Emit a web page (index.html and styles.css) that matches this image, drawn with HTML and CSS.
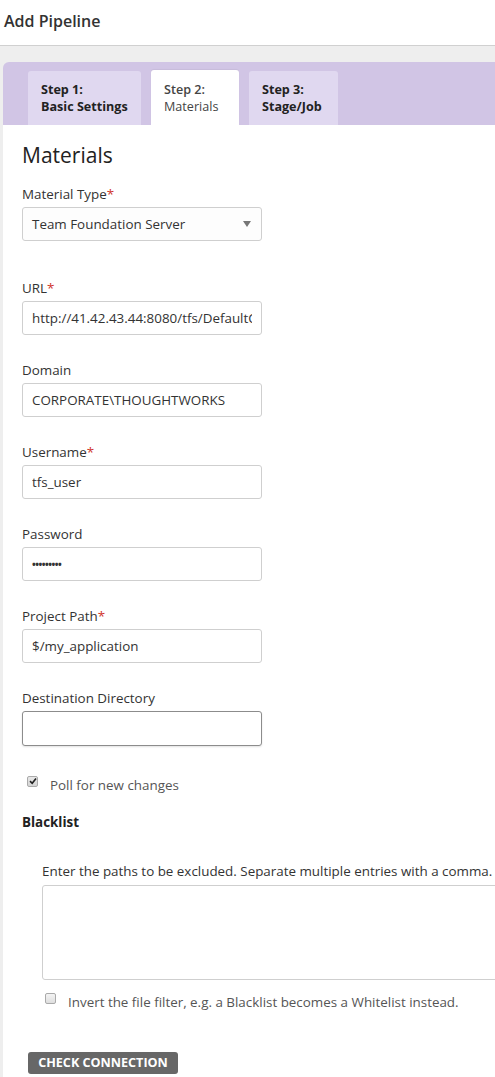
FILE: index.html
```html
<!DOCTYPE html>
<html>
<head>
<meta charset="utf-8">
<link rel="stylesheet" href="styles.css">
</head>
<body>
<header class="topbar"><span class="title">Add Pipeline</span></header>
<div class="page">
  <div class="wizard">
    <nav class="tabs">
      <div class="tab"><b>Step 1:</b><b>Basic Settings</b></div>
      <div class="tab active"><b>Step 2:</b><span>Materials</span></div>
      <div class="tab"><b>Step 3:</b><b>Stage/Job</b></div>
    </nav>
    <main class="content">
      <h2 class="heading">Materials</h2>
      <div class="field field-select">
        <label class="label">Material Type<span class="req">*</span></label>
        <div class="select">Team Foundation Server<span class="arrow"></span></div>
      </div>
      <div class="field">
        <label class="label">URL<span class="req">*</span></label>
        <input class="input" type="text" readonly value="http://41.42.43.44:8080/tfs/DefaultCollection">
      </div>
      <div class="field">
        <label class="label">Domain</label>
        <input class="input" type="text" readonly value="CORPORATE\THOUGHTWORKS">
      </div>
      <div class="field">
        <label class="label">Username<span class="req">*</span></label>
        <input class="input" type="text" readonly value="tfs_user">
      </div>
      <div class="field">
        <label class="label">Password</label>
        <div class="input pw">•••••••••</div>
      </div>
      <div class="field">
        <label class="label">Project Path<span class="req">*</span></label>
        <input class="input" type="text" readonly value="$/my_application">
      </div>
      <div class="field">
        <label class="label">Destination Directory</label>
        <input class="input focus" type="text" readonly value="">
      </div>
      <div class="check-row poll">
        <span class="checkbox checked"><svg width="8" height="8" viewBox="0 0 8 8"><path d="M1 4.2 L3.2 6.3 L7 1.5" fill="none" stroke="#222" stroke-width="1.6"/></svg></span>
        <span class="check-text">Poll for new changes</span>
      </div>
      <div class="subhead">Blacklist</div>
      <div class="blacklist">
        <div class="hint">Enter the paths to be excluded. Separate multiple entries with a comma.</div>
        <div class="textarea"></div>
        <div class="check-row invert">
          <span class="checkbox"></span>
          <span class="check-text">Invert the file filter, e.g. a Blacklist becomes a Whitelist instead.</span>
        </div>
      </div>
      <button class="btn">CHECK CONNECTION</button>
    </main>
  </div>
</div>
</body>
</html>
```

FILE: styles.css
```css
* { box-sizing: border-box; }
html, body { margin: 0; padding: 0; background: #fff; }
body {
  font-family: "Open Sans", "Noto Sans", sans-serif;
  color: #333;
  font-size: 13.4px;
  width: 495px;
  height: 1077px;
  overflow: hidden;
}
.topbar {
  height: 46px;
  border-bottom: 1px solid #d0d0d0;
  padding: 10px 0 0 4px;
  background: #fff;
}
.title {
  font-size: 16px;
  font-weight: 600;
  color: #333;
  line-height: 22px;
}
.page {
  background: #eeeeee;
  padding: 16px 0 0 3px;
}
.wizard {
  background: #d1c5e5;
  border-radius: 6px 0 0 0;
}
.tabs {
  display: flex;
  gap: 10px;
  padding: 8px 0 0 25px;
  align-items: flex-end;
}
.tab {
  display: flex;
  flex-direction: column;
  background: #e0d8f0;
  border-radius: 3px 3px 0 0;
  height: 54px;
  padding: 10px 0 0 13px;
  line-height: 17px;
  font-size: 12.6px;
  color: #222;
  white-space: nowrap;
}
.tab b { font-weight: 700; }
.tab:nth-child(1) { width: 113px; }
.tab:nth-child(3) { width: 89px; }
.tab.active {
  background: #fff;
  height: 55px;
  padding-top: 11px;
  width: 88px;
  color: #444;
  box-shadow: 0 -1px 1px rgba(0,0,0,0.05);
}
.tab.active b { font-weight: 600; }
.content {
  background: #fff;
  padding: 18px 0 0 19px;
  height: 960px;
}
.heading {
  margin: 0 0 17px 0;
  font-size: 21px;
  font-weight: 400;
  line-height: 24px;
  color: #222;
}
.field { margin-bottom: 25px; width: 240px; }
.field-select { margin-bottom: 37px; }
.label {
  display: block;
  line-height: 20px;
  margin-bottom: 3px;
  color: #333;
}
.select, .input {
  display: block;
  width: 240px;
  height: 34px;
  border: 1px solid #cfcfcf;
  border-radius: 3px;
  padding: 0 9px;
  line-height: 32px;
  color: #333;
  white-space: nowrap;
  overflow: hidden;
  background: #fff;
  font-family: "Open Sans", "Noto Sans", sans-serif;
  font-size: 13.4px;
  outline: none;
  margin: 0;
}
.req { color: #d0342c; }
.select {
  display: flex;
  justify-content: space-between;
  align-items: center;
  background: #fdfdfd;
  padding-right: 10px;
}
.arrow {
  width: 0; height: 0;
  border-left: 4px solid transparent;
  border-right: 4px solid transparent;
  border-top: 6px solid #777;
}
.input.pw { font-size: 10px; font-weight: 700; letter-spacing: -0.5px; }
.input.focus {
  border-color: #8c8c8c;
  box-shadow: 0 1px 2px rgba(0,0,0,0.12);
  height: 35px;
}
.check-row {
  display: flex;
  align-items: center;
}
.poll { margin: 30px 0 0 5px; gap: 12px; }
.checkbox {
  width: 11px; height: 11px;
  border: 1px solid #aaa;
  border-radius: 2px;
  background: linear-gradient(#f4f4f4, #dedede);
  display: inline-flex;
  align-items: center;
  justify-content: center;
  margin-top: -8px;
  flex: none;
}
.checkbox.checked { background: linear-gradient(#e8e8e8, #d4d4d4); }
.check-text { color: #555; line-height: 18px; white-space: nowrap; }
.subhead {
  margin-top: 19px;
  font-weight: 700;
  color: #222;
  line-height: 18px;
}
.blacklist { padding-left: 20px; margin-top: 31px; }
.hint { line-height: 18px; color: #333; white-space: nowrap; }
.textarea {
  margin-top: 5px;
  height: 95px;
  width: 480px;
  border: 1px solid #cfcfcf;
  border-radius: 3px;
  background: #fff;
}
.invert { margin: 13px 0 0 3px; gap: 12px; }
.btn {
  display: block;
  margin: 41px 0 0 6px;
  width: 150px;
  height: 22px;
  padding: 0;
  border: none;
  border-radius: 3px;
  background: #676767;
  color: #fff;
  font-family: "Open Sans", "Noto Sans", sans-serif;
  font-weight: 700;
  font-size: 12.6px;
  letter-spacing: 0;
  line-height: 22px;
  text-align: center;
}
```
